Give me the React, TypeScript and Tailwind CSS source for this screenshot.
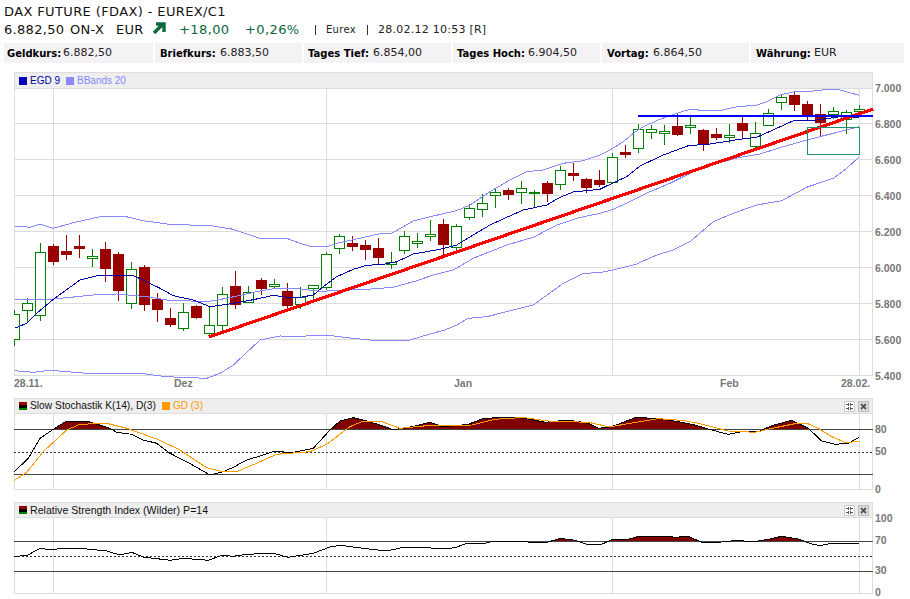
import React from "react";

type C = [number, "G" | "R", number, number, number, number];
const candles: C[] = [
  [0, "G", 314, 339, 310, 346],
  [1, "G", 303, 310, 298, 323],
  [2, "G", 252, 315, 243, 321],
  [3, "R", 246, 261, 244, 265],
  [4, "R", 251, 254, 235, 260],
  [5, "R", 246, 248, 235, 258],
  [6, "G", 256, 258, 249, 267],
  [7, "R", 249, 268, 242, 282],
  [8, "R", 254, 290, 252, 301],
  [9, "G", 269, 303, 262, 309],
  [10, "R", 267, 304, 265, 311],
  [11, "R", 299, 309, 293, 322],
  [12, "R", 318, 324, 308, 327],
  [13, "G", 312, 328, 303, 331],
  [14, "R", 306, 317, 305, 319],
  [15, "G", 325, 333, 306, 337],
  [16, "G", 294, 325, 287, 332],
  [17, "R", 286, 304, 271, 309],
  [18, "G", 292, 302, 286, 303],
  [19, "R", 280, 288, 278, 295],
  [20, "G", 284, 286, 279, 289],
  [21, "R", 291, 305, 283, 308],
  [22, "G", 297, 304, 287, 309],
  [23, "G", 285, 288, 285, 300],
  [24, "G", 254, 287, 252, 290],
  [25, "G", 236, 248, 234, 254],
  [26, "R", 243, 246, 236, 251],
  [27, "R", 245, 249, 240, 260],
  [28, "R", 248, 257, 238, 265],
  [29, "G", 262, 264, 252, 269],
  [30, "G", 236, 250, 231, 254],
  [31, "G", 241, 243, 233, 248],
  [32, "G", 234, 236, 220, 241],
  [33, "R", 224, 244, 219, 256],
  [34, "G", 226, 247, 224, 250],
  [35, "G", 208, 217, 204, 220],
  [36, "G", 203, 209, 194, 217],
  [37, "G", 192, 195, 189, 208],
  [38, "R", 190, 194, 188, 200],
  [39, "G", 188, 192, 181, 204],
  [40, "G", 192, 193, 190, 207],
  [41, "R", 183, 193, 181, 202],
  [42, "G", 170, 184, 166, 190],
  [43, "R", 173, 175, 163, 181],
  [44, "R", 179, 187, 178, 193],
  [45, "R", 180, 184, 170, 187],
  [46, "G", 157, 182, 153, 184],
  [47, "R", 152, 154, 145, 158],
  [48, "G", 129, 148, 124, 153],
  [49, "G", 129, 132, 125, 139],
  [50, "G", 131, 133, 125, 145],
  [51, "R", 126, 134, 114, 136],
  [52, "G", 125, 127, 116, 134],
  [53, "R", 130, 143, 129, 151],
  [54, "R", 134, 137, 128, 140],
  [55, "G", 135, 137, 124, 143],
  [56, "R", 123, 130, 116, 139],
  [57, "G", 133, 146, 122, 150],
  [58, "G", 113, 125, 109, 126],
  [59, "G", 97, 102, 94, 110],
  [60, "R", 95, 104, 92, 111],
  [61, "R", 104, 115, 101, 120],
  [62, "R", 114, 122, 104, 136],
  [63, "G", 111, 114, 107, 119],
  [64, "G", 112, 119, 110, 134],
  [65, "G", 109, 111, 105, 117],
];

const conv = (pts: number[][], ox: number, oy: number) =>
  pts.map(([x, y]) => `${(x / 3 + ox).toFixed(1)},${(y / 3 + oy).toFixed(1)}`).join(" ");

const upper = [
  conv([[44,78],[90,82],[120,72],[160,85],[220,68],[310,48],[370,48],[430,62],[500,72],[640,78],[700,88],[780,115],[860,115],[900,130]],0,200),
  conv([[35,350],[85,349],[110,340],[200,320],[240,311],[275,310],[340,273],[390,260],[470,242],[510,225],[570,185],[630,150],[680,125],[730,120],[790,100],[850,92],[900,75]],300,130),
  conv([[30,210],[70,185],[100,160],[130,140],[180,118],[230,100],[270,88],[320,92],[370,90],[400,82],[470,75],[500,65],[540,45],[580,36],[640,33],[690,27],[720,30],[778,46]],600,80),
].join(" ");
const mid = [
  conv([[44,297],[130,297],[160,297],[230,290],[300,283],[350,282],[440,290],[500,300],[620,305],[680,295],[780,273],[830,265],[900,267]],0,200),
  conv([[60,484],[200,478],[280,472],[350,452],[400,435],[460,420],[520,385],[620,345],[700,322],[770,285],[830,265],[900,250]],300,130),
  conv([[40,388],[90,365],[150,335],[210,310],[280,275],[350,250],[420,232],[480,222],[550,200],[620,180],[700,160],[778,140]],600,80),
].join(" ");
const lower = [
  conv([[44,512],[100,517],[150,511],[260,520],[420,520],[500,530],[620,535],[660,520],[700,495],[780,420],[840,408],[900,409]],0,200),
  "326,335 350,338 370,340 410,340 420,337 430,334",
  conv([[435,600],[470,585],[505,565],[560,560],[700,525],[790,460],[850,430],[900,428]],300,130),
  conv([[40,570],[110,552],[170,525],[220,510],[270,485],[340,425],[400,400],[470,375],[545,362],[620,322],[700,295],[740,265],[778,230]],600,80),
].join(" ");
const egd = [
  conv([[44,385],[80,370],[110,340],[160,298],[240,240],[300,225],[340,228],[400,227],[440,245],[480,265],[520,287],[580,300],[630,320],[680,313],[720,307],[780,295],[820,286],[860,292],[900,292]],0,200),
  conv([[40,495],[70,470],[110,440],[160,418],[200,406],[250,403],[290,395],[340,372],[420,358],[470,345],[520,315],[570,285],[620,262],[670,240],[740,225],[780,202],[820,186],[900,178]],300,130),
  conv([[40,308],[80,290],[120,258],[190,225],[265,197],[330,192],[420,178],[470,172],[530,145],[580,122],[650,120],[720,110],[778,113]],600,80),
].join(" ");

const stochK = [
  conv([[43,230],[85,190],[120,130],[160,103],[200,78],[260,78],[330,100],[350,112],[395,118],[430,135],[470,145],[510,175],[560,200],[630,240],[670,230],[700,217],[740,195],[790,180],[820,170],[880,172],[940,160],[990,105],[1020,78],[1060,68],[1100,78],[1140,90],[1180,104],[1210,100],[1250,92],[1290,82],[1330,96],[1365,92]],0,395),
  conv([[40,88],[80,72],[140,66],[210,70],[270,82],[340,75],[400,85],[430,100],[470,95],[540,68],[610,70],[680,82],[720,90],[770,105],[820,118],[860,110],[910,110],[950,92],[1010,76],[1060,100],[1100,138],[1140,148],[1180,145],[1213,127]],455,395),
].join(" ");
const stochD = [
  conv([[43,256],[80,232],[130,170],[200,105],[240,88],[320,85],[380,100],[470,132],[540,165],[620,218],[660,228],[710,230],[780,200],[830,178],[930,170],[980,148],[1050,95],[1090,78],[1140,78],[1200,100],[1280,92],[1365,92]],0,395),
  conv([[50,90],[110,75],[150,70],[210,68],[280,78],[400,82],[450,93],[480,93],[530,84],[610,71],[680,76],[730,85],[820,108],[900,112],[960,98],[1020,86],[1058,86],[1090,100],[1130,125],[1170,142],[1213,140]],455,395),
].join(" ");
const rsi = [
  conv([[43,484],[80,482],[120,460],[150,464],[190,460],[260,462],[320,468],[360,480],[395,472],[430,486],[510,496],[550,490],[625,496],[665,481],[700,484],[740,478],[820,475],[865,487],[940,475],[990,456],[1020,451],[1090,460],[1160,468],[1210,457],[1280,458],[1330,462],[1365,458]],0,395),
  conv([[30,447],[90,445],[110,440],[220,441],[280,441],[315,430],[360,436],[395,448],[440,448],[470,434],[520,433],[550,424],[640,424],[660,427],[700,424],[745,444],[800,441],[850,436],[890,441],[940,433],[980,424],[1030,432],[1070,447],[1095,452],[1130,445],[1213,445]],455,395),
].join(" ");

const vlines = [53.5, 326.5, 612.5, 859.5];

function MainChart() {
  const ys = [123.5, 159.5, 195.5, 231.5, 267.5, 303.5, 339.5, 375.5];
  return (
    <svg width={859} height={287} viewBox="14 89 859 287" shapeRendering="crispEdges" className="block overflow-visible">
      <g stroke="#dddddd" strokeWidth="1">
        {ys.map((y) => <line key={y} x1="14" x2="873" y1={y} y2={y} />)}
        {vlines.map((x) => <line key={x} x1={x} x2={x} y1="89" y2="376" />)}
        <line x1="14.5" x2="14.5" y1="89" y2="376" />
        <line x1="872.5" x2="872.5" y1="89" y2="376" />
      </g>
      <defs>
        <clipPath id="plotClip"><rect x="14" y="89" width="859" height="291" /></clipPath>
      </defs>
      <g clipPath="url(#plotClip)">
        {candles.map(([i, k, t, b, wt, wb]) => {
          const c = 14.5 + 13 * i;
          const col = k === "G" ? "#008000" : "#990000";
          return (
            <g key={i}>
              <line x1={c} x2={c} y1={wt} y2={wb} stroke={col} strokeWidth="1" />
              {k === "G" ? (
                <rect x={c - 5} y={t + 0.5} width={10} height={b - t} fill="#ffffff" stroke={col} strokeWidth="1" />
              ) : (
                <rect x={c - 5.5} y={t} width={11} height={b - t + 1} fill={col} />
              )}
            </g>
          );
        })}
      </g>
      <g fill="none" strokeWidth="1">
        <polyline points={upper} stroke="#8888ff" />
        <polyline points={mid} stroke="#8888ff" />
        <polyline points={lower} stroke="#8888ff" />
        <polyline points={egd} stroke="#0000aa" />
      </g>
      <line x1="209" y1="337" x2="873" y2="109" stroke="#ff0000" strokeWidth="3.2" />
      <rect x="807.5" y="127.5" width="52" height="27" fill="none" stroke="#1f8f6f" strokeWidth="1" />
      <rect x="638" y="115" width="235" height="2" fill="#0000ff" />
    </svg>
  );
}

function Osc({ hi, mid: midY, lo, h, top, line, orange }: { hi: number; mid: number; lo: number; h: number; top: number; line: string; orange?: string }) {
  const id = `clip${hi}`;
  const first = line.split(" ")[0].split(",")[0];
  const last = line.split(" ").pop()!.split(",")[0];
  return (
    <svg width={859} height={h} viewBox={`14 ${top} 859 ${h}`} shapeRendering="crispEdges" className="block overflow-visible">
      <defs>
        <clipPath id={id}><rect x="14" y={top} width="859" height={hi - top} /></clipPath>
      </defs>
      <g stroke="#dddddd" strokeWidth="1">
        {vlines.map((x) => <line key={x} x1={x} x2={x} y1={top} y2={top + h} />)}
        <line x1="14.5" x2="14.5" y1={top} y2={top + h} />
        <line x1="872.5" x2="872.5" y1={top} y2={top + h} />
        <line x1="14" x2="873" y1={top + h - 0.5} y2={top + h - 0.5} />
      </g>
      <polygon points={`${first},${hi + 1} ${line} ${last},${hi + 1}`} fill="#800000" clipPath={`url(#${id})`} />
      <line x1="14" x2="873" y1={hi + 0.5} y2={hi + 0.5} stroke="#444444" strokeWidth="1" />
      <line x1="14" x2="873" y1={midY + 0.5} y2={midY + 0.5} stroke="#333333" strokeWidth="1" strokeDasharray="2 2" />
      <line x1="14" x2="873" y1={lo + 0.5} y2={lo + 0.5} stroke="#444444" strokeWidth="1" />
      <polyline points={line} fill="none" stroke="#000000" strokeWidth="1" />
      {orange && <polyline points={orange} fill="none" stroke="#ff9900" strokeWidth="1" />}
    </svg>
  );
}

function Bars() {
  return (
    <span className="flex flex-col w-2 h-2 mr-[3px]">
      <span className="h-[3px] bg-[#990000]" />
      <span className="h-[3px] bg-black" />
      <span className="h-[2px] bg-[#008000]" />
    </span>
  );
}

function PanelButtons() {
  return (
    <div className="flex gap-[3px] mr-[3px]">
      <span className="flex items-center justify-center w-[11px] h-[11px] bg-white border border-[#cccccc]">
        <svg width="7" height="7" viewBox="0 0 7 7" shapeRendering="crispEdges">
          <path d="M0 1h3v1H0zM2 0h1v3H2zM4 1h3v1H4zM4 0h1v3H4zM0 5h3v1H0zM2 4h1v3H2zM4 5h3v1H4zM4 4h1v3H4z" fill="#555555" />
        </svg>
      </span>
      <span className="flex items-center justify-center w-[11px] h-[11px] bg-[#dddddd] border border-[#bbbbbb]">
        <svg width="7" height="7" viewBox="0 0 7 7">
          <path d="M1 1L6 6M6 1L1 6" stroke="#555555" strokeWidth="1.8" />
        </svg>
      </span>
    </div>
  );
}

const labelFont = "leading-[14px] font-['Liberation_Sans',sans-serif]";
const axisCls = "font-['Liberation_Sans',sans-serif] font-bold text-[10.5px] leading-[12px] text-[#777777]";

const stats: [string, string, string, string, string][] = [
  ["Geldkurs:", "6.882,50", "w-[149px]", "pl-[3px]", "w-[56px]"],
  ["Briefkurs:", "6.883,50", "w-[147px]", "pl-[5px]", "w-[60px]"],
  ["Tages Tief:", "6.854,00", "w-[147px]", "pl-[4px]", "w-[65px]"],
  ["Tages Hoch:", "6.904,50", "w-[147px]", "pl-[4px]", "w-[71px]"],
  ["Vortag:", "6.864,50", "w-[147px]", "pl-[5px]", "w-[46px]"],
  ["Währung:", "EUR", "w-[153px]", "pl-[5px]", "w-[58px]"],
];

export default function App() {
  return (
    <div className="w-[910px] h-[599px] overflow-hidden bg-white pt-[4px] text-black font-['DejaVu_Sans',sans-serif]">
      <div className="pl-[4px] h-4 text-[13px] leading-4 font-normal tracking-[0.38px] text-[#111111]">DAX FUTURE (FDAX) - EUREX/C1</div>
      <div className="flex items-center pl-[4px] mt-[2px] h-4 leading-4">
        <span className="text-[13px] w-[66px] tracking-[0.3px] text-[#111111]">6.882,50</span>
        <span className="text-[13px] w-[46px] tracking-[0.3px] text-[#111111]">ON-X</span>
        <span className="text-[13px] w-[37px] tracking-[0.3px] text-[#111111]">EUR</span>
        <svg width="13" height="12" viewBox="0 0 13 12" className="mt-[-4px]">
          <path d="M1 11L9 3M3 2H11V10" fill="none" stroke="#0a6a3c" strokeWidth="3.4" />
        </svg>
        <span className="ml-[13px] w-[66px] text-[13px] tracking-[0.4px] text-[#0a6640]">+18,00</span>
        <span className="w-[70px] text-[13px] tracking-[0.4px] text-[#0a6640]">+0,26%</span>
        <span className="w-px h-[10px] bg-[#333333] mr-[10px]" />
        <span className="w-[41px] text-[10px] tracking-[0.3px] text-[#222222]">Eurex</span>
        <span className="w-px h-[10px] bg-[#333333] mr-[10px]" />
        <span className="text-[11px] tracking-[0.25px] text-[#222222]">28.02.12 10:53 [R]</span>
      </div>
      <div className="flex gap-[2px] ml-[4px] mt-[5px] h-[20px]">
        {stats.map(([k, v, w, pl, lw]) => (
          <div key={k} className={`${w} ${pl} flex items-center bg-[#f5f2f6] text-[11px]`}>
            <span className={`${lw} font-bold text-[10px] whitespace-nowrap`}>{k}</span>
            <span className="text-[#222222]">{v}</span>
          </div>
        ))}
      </div>

      <div className="flex ml-[14px] mt-[9px] h-[304px]">
        <div className="w-[859px]">
          <div className={`flex items-center h-[17px] pl-1 bg-[#eeeeee] border border-[#dddddd] text-[10px] ${labelFont}`}>
            <span className="w-2 h-2 bg-[#0000bb] mr-[3px]" />
            <span className="text-[#0000aa] w-[36px]">EGD 9</span>
            <span className="w-2 h-2 bg-[#8888ff] mr-[3px]" />
            <span className="text-[#8888ff]">BBands 20</span>
          </div>
          <MainChart />
        </div>
        <div className={`flex flex-col pl-[2px] pt-[10px] ${axisCls}`}>
          {["7.000","6.800","6.600","6.400","6.200","6.000","5.800","5.600","5.400"].map((t) => (
            <span key={t} className="h-9 shrink-0">{t}</span>
          ))}
        </div>
      </div>

      <div className={`flex items-center ml-[14px] h-[14px] ${axisCls}`}>
        <span className="w-[160px]">28.11.</span>
        <span className="w-[280px]">Dez</span>
        <span className="w-[266px]">Jan</span>
        <span className="w-[121px]">Feb</span>
        <span>28.02.</span>
      </div>

      <div className="flex ml-[14px] mt-[8px] h-[92px]">
        <div className="w-[859px]">
          <div className={`flex items-center justify-between h-[16px] pl-1 bg-[#eeeeee] border border-[#dddddd] ${labelFont}`}>
            <span className="flex items-center">
              <Bars />
              <span className="w-[132px] text-[10.25px] text-[#111111]">Slow Stochastik K(14), D(3)</span>
              <span className="w-2 h-2 bg-[#ff9900] mr-[3px]" />
              <span className="text-[10px] text-[#ff9900]">GD (3)</span>
            </span>
            <PanelButtons />
          </div>
          <Osc hi={429} mid={452} lo={474} top={414} h={76} line={stochK} orange={stochD} />
        </div>
        <div className={`flex flex-col pl-[2px] ${axisCls}`}>
          <span className="mt-[25px]">80</span>
          <span className="mt-[10px]">50</span>
          <span className="mt-[26px]">0</span>
        </div>
      </div>

      <div className="flex ml-[14px] mt-[12px] h-[92px]">
        <div className="w-[859px]">
          <div className={`flex items-center justify-between h-[16px] pl-1 bg-[#eeeeee] border border-[#dddddd] ${labelFont}`}>
            <span className="flex items-center">
              <Bars />
              <span className="text-[10.6px] text-[#111111]">Relative Strength Index (Wilder) P=14</span>
            </span>
            <PanelButtons />
          </div>
          <Osc hi={541} mid={556} lo={571} top={518} h={76} line={rsi} />
        </div>
        <div className={`flex flex-col pl-[2px] ${axisCls}`}>
          <span className="mt-[10px]">100</span>
          <span className="mt-[10px]">70</span>
          <span className="mt-[18px]">30</span>
          <span className="mt-[10px]">0</span>
        </div>
      </div>
    </div>
  );
}
